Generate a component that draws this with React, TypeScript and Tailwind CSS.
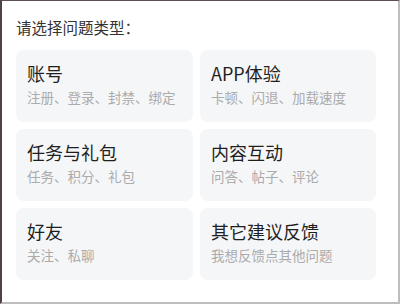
const items = [
  { title: "账号", desc: "注册、登录、封禁、绑定" },
  { title: "APP体验", desc: "卡顿、闪退、加载速度" },
  { title: "任务与礼包", desc: "任务、积分、礼包" },
  { title: "内容互动", desc: "问答、帖子、评论" },
  { title: "好友", desc: "关注、私聊" },
  { title: "其它建议反馈", desc: "我想反馈点其他问题" },
];

export default function App() {
  return (
    <div
      className="w-[400px] h-[304px] bg-white border-t border-l-2 border-r-2 border-b-2 border-t-[#5b4f4f] border-l-[#4e4444] border-r-[#bdbdbd] border-b-[#bdbdbd] overflow-hidden"
      style={{ fontFamily: '"Noto Sans CJK SC", "Noto Sans", sans-serif' }}
    >
      <p className="pl-[14px] pt-[16px] text-[15.5px] leading-[20px] text-[#333333]">
        请选择问题类型：
      </p>
      <div className="grid grid-cols-[177px_176px] gap-x-[7px] gap-y-[7px] pl-[14px] mt-[13px]">
        {items.map((it) => (
          <div
            key={it.title}
            className="h-[72px] rounded-lg bg-[#f5f6f8] pl-[11px] pt-[11px]"
          >
            <p className="text-[18px] leading-[24px] text-[#1f1f1f]">{it.title}</p>
            <p className="mt-[3px] text-[13.5px] leading-[18px] text-[#ababab]">
              {it.desc}
            </p>
          </div>
        ))}
      </div>
    </div>
  );
}
